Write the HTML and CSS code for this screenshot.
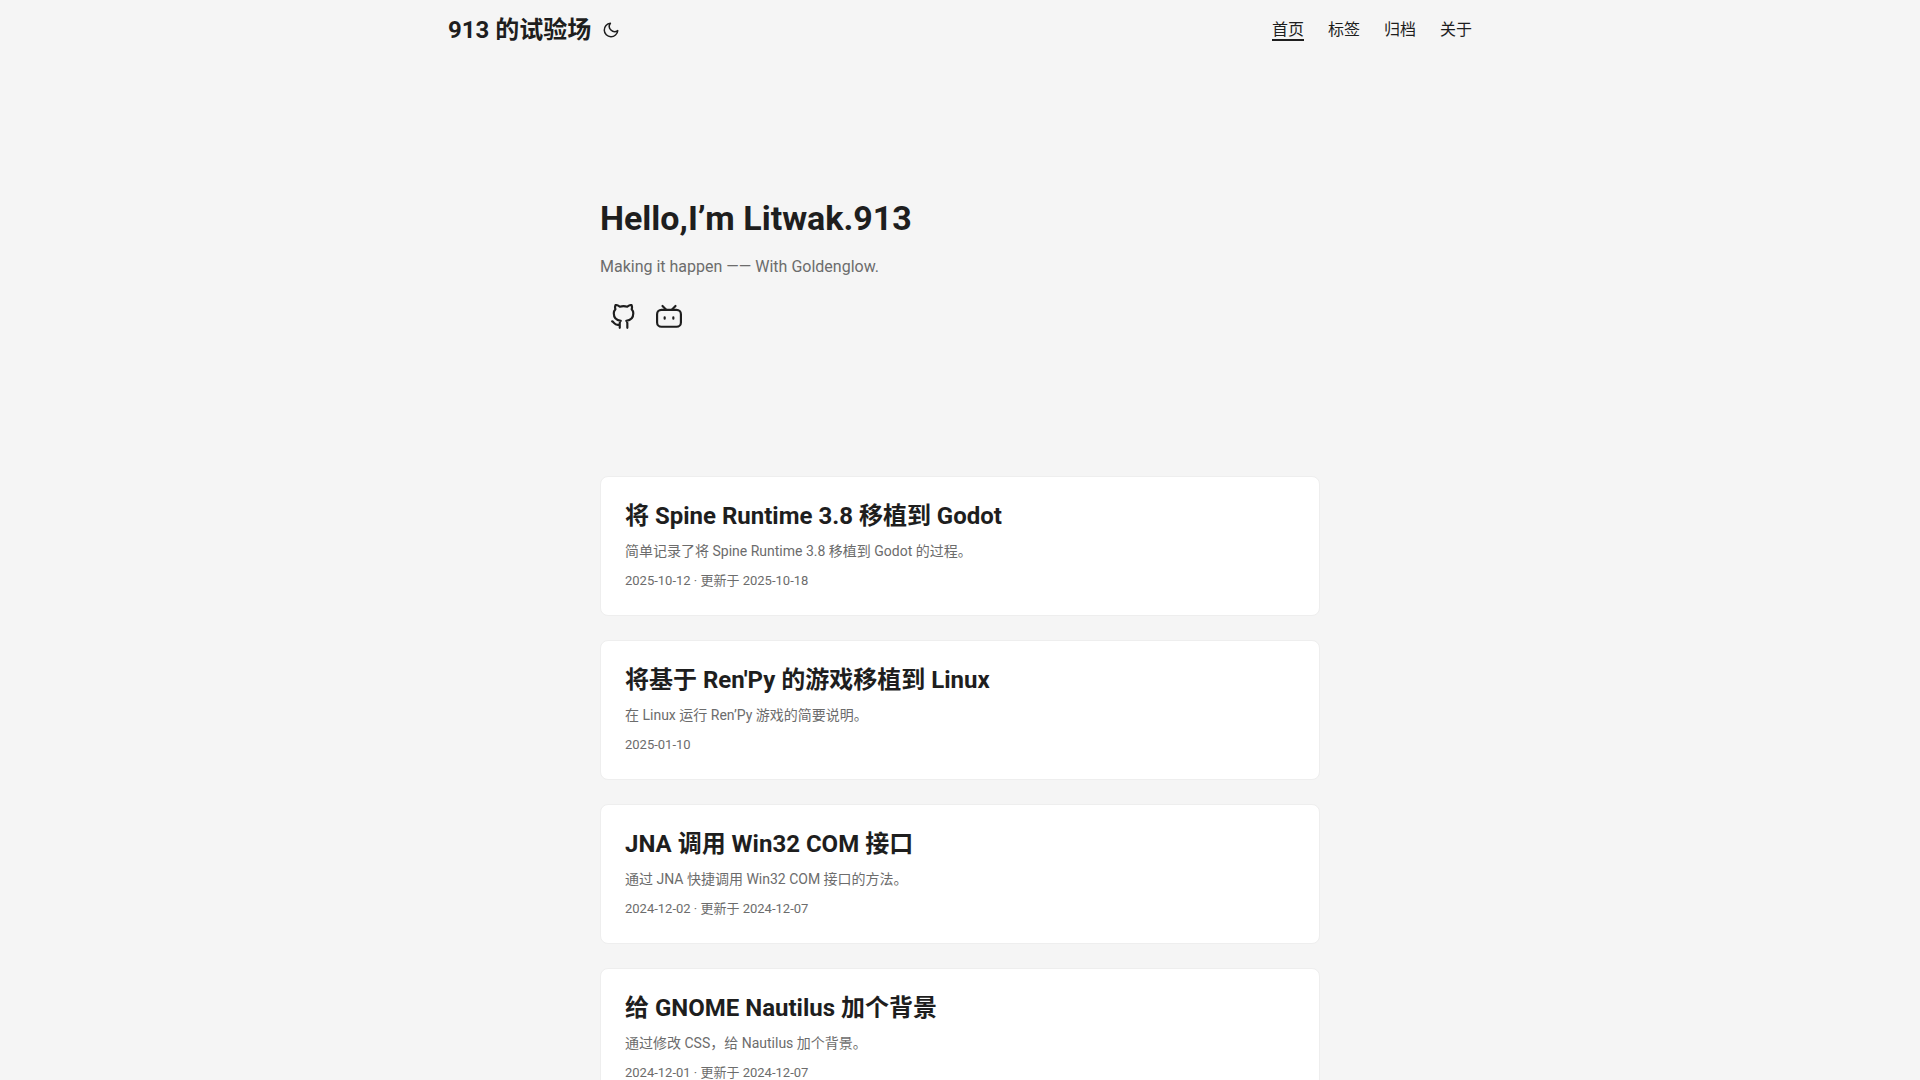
FILE: index.html
```html
<!DOCTYPE html>
<html lang="zh-CN">
<head>
  <meta charset="UTF-8">
  <meta name="viewport" content="width=device-width, initial-scale=1">
  <title>913 的试验场</title>
  <link rel="stylesheet" href="styles.css">
</head>
<body>
  <header class="header">
    <nav class="nav">
      <div class="logo">
        <a href="/">913 的试验场</a>
        <button id="theme-toggle" class="theme-toggle" aria-label="切换主题">
          <svg width="18" height="18" viewBox="0 0 24 24" fill="none" stroke="currentColor" stroke-width="2" stroke-linecap="round" stroke-linejoin="round">
            <path d="M21 12.79A9 9 0 1 1 11.21 3 7 7 0 0 0 21 12.79z"/>
          </svg>
        </button>
      </div>
      <ul class="menu">
        <li><a href="/" class="active">首页</a></li>
        <li><a href="/tags/">标签</a></li>
        <li><a href="/archives/">归档</a></li>
        <li><a href="/about/">关于</a></li>
      </ul>
    </nav>
  </header>

  <main class="main">
    <section class="home-info">
      <h1>Hello,I’m Litwak.913</h1>
      <p>Making it happen —— With Goldenglow.</p>
      <div class="social-icons">
        <a href="/github" aria-label="Github">
          <svg viewBox="0 0 24 24" fill="none" stroke="currentColor" stroke-width="2" stroke-linecap="round" stroke-linejoin="round">
            <path d="M9 19c-5 1.5-5-2.5-7-3m14 6v-3.87a3.37 3.37 0 0 0-.94-2.61c3.14-.35 6.44-1.54 6.44-7A5.44 5.44 0 0 0 20 4.77 5.07 5.07 0 0 0 19.91 1S18.73.65 16 2.48a13.38 13.38 0 0 0-7 0C6.27.65 5.09 1 5.09 1A5.07 5.07 0 0 0 5 4.77a5.44 5.44 0 0 0-1.5 3.78c0 5.42 3.3 6.61 6.44 7A3.37 3.37 0 0 0 9 18.13V22"/>
          </svg>
        </a>
        <a href="/bilibili" aria-label="Bilibili">
          <svg viewBox="0 0 24 24" fill="none" stroke="currentColor" stroke-width="2" stroke-linecap="round" stroke-linejoin="round">
            <rect x="1" y="5.4" width="22" height="15.6" rx="4"/>
            <path d="M6 1.8l3.2 3.2M18 1.8l-3.2 3.2M8 12.2v1.4M16 12.2v1.4"/>
          </svg>
        </a>
      </div>
    </section>

    <article class="post-entry">
      <h2><a href="/posts/spine-godot/">将 Spine Runtime 3.8 移植到 Godot</a></h2>
      <p>简单记录了将 Spine Runtime 3.8 移植到 Godot 的过程。</p>
      <footer>2025-10-12 · 更新于 2025-10-18</footer>
    </article>

    <article class="post-entry">
      <h2><a href="/posts/renpy-linux/">将基于 Ren'Py 的游戏移植到 Linux</a></h2>
      <p>在 Linux 运行 Ren’Py 游戏的简要说明。</p>
      <footer>2025-01-10</footer>
    </article>

    <article class="post-entry">
      <h2><a href="/posts/jna-com/">JNA 调用 Win32 COM 接口</a></h2>
      <p>通过 JNA 快捷调用 Win32 COM 接口的方法。</p>
      <footer>2024-12-02 · 更新于 2024-12-07</footer>
    </article>

    <article class="post-entry">
      <h2><a href="/posts/nautilus-background/">给 GNOME Nautilus 加个背景</a></h2>
      <p>通过修改 CSS，给 Nautilus 加个背景。</p>
      <footer>2024-12-01 · 更新于 2024-12-07</footer>
    </article>
  </main>
</body>
</html>
```
FILE: styles.css
```css
:root {
  --gap: 24px;
  --theme: #f5f5f5;
  --entry: #fff;
  --primary: #1e1e1e;
  --secondary: #6c6c6c;
  --border: #eee;
}
* {
  box-sizing: border-box;
  margin: 0;
  padding: 0;
}
body {
  background: var(--theme);
  color: var(--primary);
  font-family: Roboto, "Noto Sans CJK SC", sans-serif;
  font-size: 16px;
  line-height: 26px;
}
a {
  color: inherit;
  text-decoration: none;
}
ul {
  list-style: none;
}
svg {
  display: block;
}

/* header */
.nav {
  display: flex;
  justify-content: space-between;
  max-width: 1072px;
  height: 60px;
  margin: 0 auto;
  padding: 0 var(--gap);
}
.logo {
  display: flex;
  align-items: center;
  gap: 11px;
  font-size: 24px;
  font-weight: 700;
}
.theme-toggle {
  border: none;
  background: none;
  color: inherit;
  cursor: pointer;
}
.menu {
  display: flex;
  align-items: center;
  gap: var(--gap);
}
.active {
  border-bottom: 2px solid currentColor;
}

/* content */
.main {
  max-width: 768px;
  margin: 0 auto;
  padding: var(--gap);
}
.home-info {
  display: flex;
  flex-direction: column;
  justify-content: center;
  min-height: 320px;
  margin: var(--gap) 0 48px;
}
.home-info h1 {
  font-size: 34px;
  line-height: 44px;
}
.home-info p {
  margin: 14px 0;
  color: var(--secondary);
}
.social-icons {
  display: flex;
}
.social-icons a {
  padding: 10px;
}
.social-icons svg {
  width: 26px;
  height: 26px;
}
.post-entry {
  margin-bottom: var(--gap);
  padding: var(--gap);
  background: var(--entry);
  border: 1px solid var(--border);
  border-radius: 8px;
}
.post-entry h2 {
  font-size: 24px;
  line-height: 31px;
}
.post-entry p {
  margin: 8px 0;
  color: var(--secondary);
  font-size: 14px;
  line-height: 22px;
}
.post-entry footer {
  color: var(--secondary);
  font-size: 13px;
  line-height: 21px;
}
```
